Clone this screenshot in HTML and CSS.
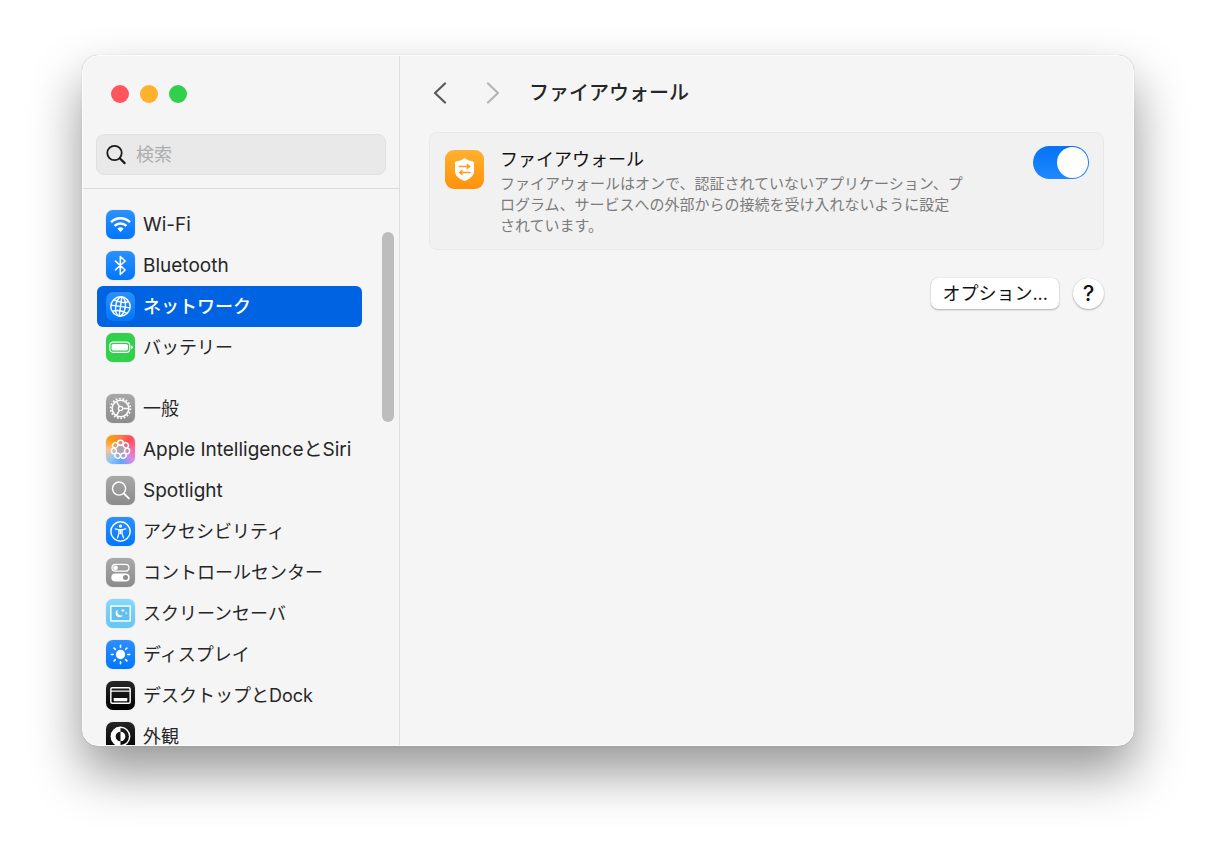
FILE: index.html
```
<!DOCTYPE html>
<html lang="ja">
<head>
    <meta charset="UTF-8">
    <meta name="viewport" content="width=device-width, initial-scale=1.0">
    <title>ファイアウォール</title>
    <link rel="stylesheet" href="styles.css">
</head>
<body>
    <div class="window">
        <aside class="sidebar">
            <div class="sidebar-top">
                <div class="lights">
                    <button class="light light-close" aria-label="閉じる"></button>
                    <button class="light light-min" aria-label="しまう"></button>
                    <button class="light light-max" aria-label="拡大"></button>
                </div>
                <label class="search">
                    <svg width="22" height="22" viewBox="0 0 22 22" fill="none" stroke="#1a1a1a" stroke-linecap="round">
                        <circle cx="9.5" cy="9" r="7.2" stroke-width="1.8"/>
                        <path d="M15 14.500l4.600 4.600" stroke-width="2.2"/>
                    </svg>
                    <input type="text" placeholder="検索" aria-label="検索">
                </label>
            </div>

            <div class="list-wrap">
                <nav class="list">
                    <div class="group">
                        <a class="item latin" href="#">
                            <span class="icon blue"><svg viewBox="0 0 30 30" fill="none" stroke="#fff" stroke-width="2.6">
                                <path d="M5.2 12.6a14 14 0 0 1 19.6 0"/>
                                <path d="M8.9 16.4a8.7 8.7 0 0 1 12.2 0"/>
                                <path d="M15 22.8l-3.200-3.300a4.600 4.600 0 0 1 6.400 0z" fill="#fff" stroke="none"/>
                            </svg></span>
                            Wi-Fi
                        </a>
                        <a class="item latin" href="#">
                            <span class="icon blue"><svg viewBox="0 0 30 30" fill="none" stroke="#fff" stroke-width="1.6" stroke-linejoin="round" stroke-linecap="round">
                                <path d="M9.8 10.5l10 9.2-5 4.6V5.7l5 4.6-10 9.2"/>
                            </svg></span>
                            Bluetooth
                        </a>
                        <a class="item active" href="#" aria-current="page">
                            <span class="icon blue"><svg viewBox="0 0 30 30" fill="none" stroke="#fff" stroke-width="1.5">
                                <circle cx="15" cy="15" r="10"/>
                                <g transform="rotate(8 15 15)">
                                    <ellipse cx="15" cy="15" rx="5" ry="10"/>
                                    <path d="M15 5v20M5 15h20M7.200 9q7.800 3.400 15.600 0M7.200 21q7.800-3.400 15.600 0"/>
                                </g>
                            </svg></span>
                            ネットワーク
                        </a>
                        <a class="item" href="#">
                            <span class="icon green"><svg viewBox="0 0 30 30">
                                <rect x="4" y="9.500" width="20.500" height="10.500" rx="3.500" fill="none" stroke="#fff" stroke-width="1.200"/>
                                <rect x="5.800" y="11.300" width="16.900" height="6.900" rx="2" fill="#fff"/>
                                <path d="M25.800 12.800q2 .6 2 2t-2 2z" fill="#fff"/>
                            </svg></span>
                            バッテリー
                        </a>
                    </div>

                    <div class="group">
                        <a class="item" href="#">
                            <span class="icon gray"><svg viewBox="0 0 30 30" fill="none" stroke="#fff">
                                <circle cx="15" cy="15" r="10.200" stroke-width="1.800" stroke-dasharray="1.800 1.760"/>
                                <circle cx="15" cy="15" r="8.600" stroke-width="1.500"/>
                                <circle cx="15" cy="15" r="2.200" stroke-width="1.300"/>
                                <path d="M17.200 15h6.500M13.900 13.100l-3.300-5.700M13.900 16.900l-3.300 5.700" stroke-width="1.500"/>
                            </svg></span>
                            一般
                        </a>
                        <a class="item latin" href="#">
                            <span class="icon siri"><svg viewBox="0 0 30 30" fill="none" stroke="#fff" stroke-width="1.500">
                                <g id="petal"><ellipse cx="15" cy="8" rx="2.900" ry="2.600"/></g>
                                <use href="#petal" transform="rotate(51.400 15 15)"/>
                                <use href="#petal" transform="rotate(102.900 15 15)"/>
                                <use href="#petal" transform="rotate(154.300 15 15)"/>
                                <use href="#petal" transform="rotate(205.700 15 15)"/>
                                <use href="#petal" transform="rotate(257.100 15 15)"/>
                                <use href="#petal" transform="rotate(308.600 15 15)"/>
                            </svg></span>
                            Apple IntelligenceとSiri
                        </a>
                        <a class="item latin" href="#">
                            <span class="icon gray"><svg viewBox="0 0 30 30" fill="none" stroke="#fff" stroke-linecap="round">
                                <circle cx="13.500" cy="13" r="6.800" stroke-width="1.500"/>
                                <path d="M18.600 18.200l5 5" stroke-width="2"/>
                            </svg></span>
                            Spotlight
                        </a>
                        <a class="item" href="#">
                            <span class="icon blue"><svg viewBox="0 0 30 30" fill="none" stroke="#fff">
                                <circle cx="15" cy="15" r="10" stroke-width="1.500"/>
                                <circle cx="15" cy="9.400" r="1.700" fill="#fff" stroke="none"/>
                                <path d="M9.700 12.300l3.900 1h2.800l3.900-1M15 13.300v3.700" stroke-width="1.500" stroke-linecap="round"/>
                                <path d="M13.400 13h3.200v4l1.500 4.600M13.400 13v4l-1.500 4.600" stroke-width="1.400" stroke-linecap="round"/>
                            </svg></span>
                            アクセシビリティ
                        </a>
                        <a class="item" href="#">
                            <span class="icon gray"><svg viewBox="0 0 30 30">
                                <rect x="6.200" y="6.700" width="17.600" height="7" rx="3.500" fill="none" stroke="#fff" stroke-width="1.300"/>
                                <circle cx="9.800" cy="10.200" r="2.500" fill="#fff"/>
                                <rect x="5.500" y="16" width="19" height="8.400" rx="4.200" fill="#fff"/>
                                <circle cx="20.200" cy="20.200" r="2.600" fill="#8e8e8e"/>
                            </svg></span>
                            コントロールセンター
                        </a>
                        <a class="item" href="#">
                            <span class="icon cyan"><svg viewBox="0 0 30 30">
                                <rect x="5" y="7.300" width="20" height="15.400" fill="#5fc0ef" stroke="#fff" stroke-width="1.500"/>
                                <path d="M12.600 10.800a4.200 4.200 0 1 0 5.200 5.800 4 4 0 0 1-5.200-5.800z" fill="#fff"/>
                                <path d="M17.500 9.700l.6 1.500 1.500.6-1.500.6-.6 1.500-.6-1.500-1.500-.6 1.500-.6zM20.800 13l.4 1.100 1.100.4-1.100.4-.4 1.100-.4-1.100-1.100-.4 1.100-.4z" fill="#fff"/>
                            </svg></span>
                            スクリーンセーバ
                        </a>
                        <a class="item" href="#">
                            <span class="icon blue"><svg viewBox="0 0 30 30" stroke="#fff" stroke-width="1.700" stroke-linecap="round">
                                <circle cx="15" cy="15" r="4.800" fill="#fff" stroke="none"/>
                                <path d="M15 5.500v2M15 22.500v2M5.500 15h2M22.500 15h2M8.300 8.300l1.400 1.400M20.300 20.300l1.400 1.400M8.300 21.700l1.400-1.400M20.300 9.700l1.400-1.400"/>
                            </svg></span>
                            ディスプレイ
                        </a>
                        <a class="item" href="#">
                            <span class="icon black"><svg viewBox="0 0 30 30">
                                <rect x="5" y="7" width="20" height="16" rx="1.500" fill="none" stroke="#fff" stroke-width="1.500"/>
                                <path d="M5 10.500h20" stroke="#fff" stroke-width="1.200"/>
                                <rect x="8" y="17.500" width="14" height="3.500" rx=".5" fill="#fff"/>
                            </svg></span>
                            デスクトップとDock
                        </a>
                        <a class="item" href="#">
                            <span class="icon black"><svg viewBox="0 0 30 30">
                                <circle cx="15" cy="15" r="9.500" fill="none" stroke="#fff" stroke-width="1.500"/>
                                <path d="M15 5a10 10 0 0 0 0 20v-5a5 5 0 0 1 0-10z" fill="#fff"/>
                                <path d="M15 10a5 5 0 0 1 0 10z" fill="#fff"/>
                            </svg></span>
                            外観
                        </a>
                    </div>
                </nav>
                <div class="scroll-thumb"></div>
            </div>
        </aside>

        <main class="content">
            <header class="toolbar">
                <button class="nav-btn" aria-label="戻る">
                    <svg width="14" height="22" viewBox="0 0 14 22" fill="none" stroke="#5a5a5a" stroke-width="2.200" stroke-linecap="round" stroke-linejoin="round"><path d="M12 1.500L2 11l10 9.500"/></svg>
                </button>
                <button class="nav-btn" aria-label="進む" disabled>
                    <svg width="14" height="22" viewBox="0 0 14 22" fill="none" stroke="#b4b4b4" stroke-width="2.200" stroke-linecap="round" stroke-linejoin="round"><path d="M2 1.500L12 11 2 20.500"/></svg>
                </button>
                <h1>ファイアウォール</h1>
            </header>

            <section class="card">
                <svg class="card-icon" viewBox="0 0 39 39">
                    <defs>
                        <linearGradient id="orange" x1="0" y1="0" x2="0" y2="1">
                            <stop offset="0" stop-color="#ffb030"/>
                            <stop offset="1" stop-color="#ff920a"/>
                        </linearGradient>
                    </defs>
                    <rect width="39" height="39" rx="9" fill="url(#orange)"/>
                    <path d="M19.500 8c3 2.200 6 3.200 8.300 3.400.8.100 1.200.6 1.200 1.300v8.300c0 4.800-4 7.800-9.500 10-5.500-2.200-9.500-5.200-9.500-10v-8.300c0-.7.400-1.200 1.200-1.300 2.300-.2 5.300-1.200 8.300-3.400z" fill="#fff"/>
                    <g fill="none" stroke="#ff9d1c" stroke-width="1.700" stroke-linecap="round" stroke-linejoin="round">
                        <path d="M14.500 16.500h9.500"/>
                        <path d="M15.500 22.500h9.500"/>
                    </g>
                    <path d="M21.800 13.300l4 3.200-4 3.200zM17.500 19.300l-4 3.200 4 3.200z" fill="#ff9d1c"/>
                </svg>
                <div class="card-text">
                    <label class="card-title" for="firewall">ファイアウォール</label>
                    <p>ファイアウォールはオンで、認証されていないアプリケーション、プログラム、サービスへの外部からの接続を受け入れないように設定<br>されています。</p>
                </div>
                <input type="checkbox" class="switch" id="firewall" role="switch" checked>
            </section>

            <div class="actions">
                <button class="btn">オプション...</button>
                <button class="help" aria-label="ヘルプ">?</button>
            </div>
        </main>
    </div>
</body>
</html>
```
FILE: styles.css
```
* {
    box-sizing: border-box;
}

body {
    margin: 0;
    height: 100vh;
    padding: 55px 82px 109px;
    background-color: #fff;
    font-family: Inter, "Noto Sans CJK JP", sans-serif;
    font-size: 18px;
    color: #262626;
    overflow: hidden;
}

button {
    font-family: inherit;
    border: none;
    padding: 0;
    background: none;
}

.window {
    display: flex;
    height: 100%;
    background-color: #f5f5f5;
    border: 1px solid #fdfdfd;
    border-radius: 16px;
    overflow: hidden;
    box-shadow: 0 0 1px rgba(0,0,0,0.3), 0 26px 52px rgba(0,0,0,0.42);
}

/* Sidebar */
.sidebar {
    display: flex;
    flex-direction: column;
    width: 317px;
    flex-shrink: 0;
    border-right: 1px solid #dedede;
}

.sidebar-top {
    padding: 29px 13px 13px;
    border-bottom: 1px solid #dadada;
}

.lights {
    display: flex;
    gap: 11px;
    padding-left: 15px;
    margin-bottom: 31px;
}

.light {
    width: 18px;
    height: 18px;
    border-radius: 50%;
}

.light-close {
    background-color: #ff555d;
}

.light-min {
    background-color: #ffb02c;
}

.light-max {
    background-color: #32cf4b;
}

.search {
    display: flex;
    align-items: center;
    gap: 9px;
    height: 41px;
    padding: 0 8px;
    background-color: #e9e9e9;
    border: 1px solid #e0e0e0;
    border-radius: 8px;
}

.search input {
    flex: 1;
    min-width: 0;
    padding: 0;
    border: none;
    outline: none;
    background: none;
    font: inherit;
}

.search input::placeholder {
    color: #adadad;
}

.list-wrap {
    position: relative;
    flex: 1;
    min-height: 0;
}

.list {
    display: flex;
    flex-direction: column;
    gap: 20px;
    height: 100%;
    padding: 15px 37px 0 14px;
    overflow-y: auto;
    scrollbar-width: none;
}

.item {
    display: flex;
    align-items: center;
    gap: 8px;
    height: 41px;
    padding: 0 9px;
    border-radius: 6px;
    color: inherit;
    line-height: 24px;
    text-decoration: none;
    white-space: nowrap;
}

.item.latin {
    font-size: 19px;
}

.item.active {
    background-color: #0063e1;
    color: #fff;
    font-weight: 500;
}

.scroll-thumb {
    position: absolute;
    top: 43px;
    right: 5px;
    width: 12px;
    height: 190px;
    border-radius: 6px;
    background-color: #bdbdbd;
}

.icon {
    width: 29px;
    height: 29px;
    flex-shrink: 0;
    border-radius: 7px;
    box-shadow: 0 0 1px rgba(0,0,0,0.3);
}

.icon svg {
    display: block;
}

.blue {
    background: linear-gradient(#2c90ff, #0077ff);
}

.green {
    background-color: #32d14c;
}

.gray {
    background: linear-gradient(#a8a8a8, #8b8b8b);
}

.cyan {
    background: linear-gradient(#85d9fb, #66c5f3);
}

.black {
    background: linear-gradient(#262626, #000);
}

.siri {
    background:
        radial-gradient(circle at 50% 50%, #b0a3b8 15%, transparent 45%),
        conic-gradient(#ff7a45, #ff4a60 45deg, #f56ea5 90deg, #d58ae6 130deg, #58a8ff 180deg, #8fc8f5 225deg, #ffc08a 270deg, #ff9a10 315deg, #ff7a45);
}

/* Content */
.content {
    flex: 1;
    min-width: 0;
    padding: 19px 29px;
}

.toolbar {
    display: flex;
    align-items: center;
    height: 36px;
    padding-left: 4px;
    margin-bottom: 21px;
}

.nav-btn {
    display: flex;
    margin-right: 39px;
}

.nav-btn:disabled {
    margin-right: 29px;
}

h1 {
    margin: 0;
    font-size: 20px;
    font-weight: 500;
    line-height: 28px;
}

.card {
    display: flex;
    align-items: flex-start;
    gap: 16px;
    padding: 13px 14px 13px 15px;
    background-color: #f1f1f1;
    border: 1px solid #e8e8e8;
    border-radius: 8px;
}

.card-icon {
    width: 39px;
    height: 39px;
    margin-top: 4px;
    flex-shrink: 0;
}

.card-text {
    width: 466px;
}

.card-title {
    display: block;
    line-height: 27px;
    color: #111;
}

.card-text p {
    margin: 0;
    font-size: 15px;
    line-height: 21px;
    color: #7b7b7b;
}

.switch {
    appearance: none;
    display: flex;
    width: 56px;
    height: 33px;
    margin: 0 0 0 auto;
    padding: 1px;
    border-radius: 17px;
    background-color: #c8c8c8;
}

.switch::before {
    content: "";
    width: 31px;
    height: 31px;
    border-radius: 50%;
    background-color: #fff;
}

.switch:checked {
    justify-content: flex-end;
    background: linear-gradient(#0573f5, #1f88ff);
}

.actions {
    display: flex;
    justify-content: flex-end;
    gap: 14px;
    margin-top: 28px;
}

.btn,
.help {
    height: 31px;
    background-color: #fff;
    color: #111;
    box-shadow: 0 1px 2px rgba(0,0,0,0.28), 0 0 1px rgba(0,0,0,0.2);
}

.btn {
    padding: 0 11px;
    border-radius: 7px;
    font-size: 18px;
    line-height: 30px;
}

.help {
    width: 31px;
    border-radius: 50%;
    font-size: 22px;
    font-weight: 500;
    line-height: 31px;
}
```
